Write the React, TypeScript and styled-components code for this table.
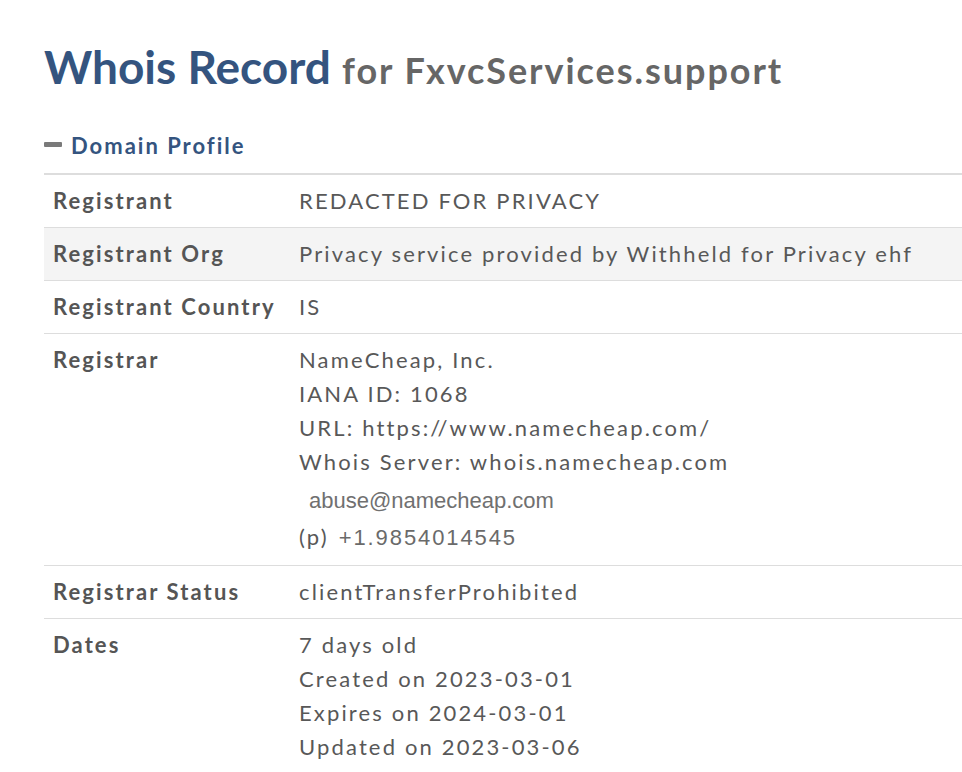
import React from "react";
import styled, { createGlobalStyle } from "styled-components";

const Global = createGlobalStyle`
  html, body { margin: 0; padding: 0; background: #fff; }
  body { font-family: Lato, "Open Sans", sans-serif; color: #555; }
`;

const Page = styled.div`
  padding: 41px 0 0 44px;
  overflow: hidden;
`;

const Title = styled.h1`
  margin: 0;
  font-family: Lato, sans-serif;
  font-weight: 700;
  font-size: 46px;
  line-height: 52px;
  height: 52px;
  color: #34547f;
  white-space: nowrap;
`;

const TitleSub = styled.span`
  font-size: 36px;
  line-height: 1;
  color: #666;
  letter-spacing: 1.95px;
`;

const SectionHead = styled.div`
  display: flex;
  align-items: center;
  gap: 9px;
  margin-top: 40px;
  height: 26px;
  font-weight: 700;
  font-size: 22px;
  line-height: 26px;
  color: #34547f;
  letter-spacing: 2px;
`;

const Minus = styled.span`
  display: inline-block;
  width: 18px;
  height: 5px;
  margin-bottom: 4px;
  border-radius: 1px;
  background: #7a7a7a;
`;

const Table = styled.div`
  margin-top: 14px;
  border-top: 2px solid #ddd;
  width: 960px;
`;

const Row = styled.div<{ $shade?: boolean }>`
  display: grid;
  grid-template-columns: 255px 1fr;
  background: ${(p) => (p.$shade ? "#f4f4f4" : "#fff")};
  border-bottom: 1px solid #ddd;
  padding: 9px 0;
`;

const Label = styled.div`
  padding-left: 9px;
  font-weight: 700;
  font-size: 22px;
  line-height: 34px;
  color: #555;
  letter-spacing: 2.1px;
  white-space: nowrap;
`;

const Value = styled.div`
  font-size: 22px;
  line-height: 34px;
  color: #585858;
  letter-spacing: 2.15px;
  white-space: nowrap;
`;

const Email = styled.div`
  font-family: "Liberation Sans", Arial, sans-serif;
  font-size: 22px;
  letter-spacing: 0;
  color: #707070;
  padding-left: 10px;
  line-height: 36px;
  margin-top: 4px;
`;

const Phone = styled.div`
  line-height: 36px;
`;

const PhoneNum = styled.span`
  font-family: "Liberation Sans", Arial, sans-serif;
  font-size: 22px;
  letter-spacing: 1.9px;
  color: #6a6a6a;
  margin-left: 10px;
`;

const rows: { label: string; lines: React.ReactNode; shade?: boolean }[] = [
  { label: "Registrant", lines: "REDACTED FOR PRIVACY" },
  {
    label: "Registrant Org",
    lines: "Privacy service provided by Withheld for Privacy ehf",
    shade: true,
  },
  { label: "Registrant Country", lines: "IS" },
];

export default function App() {
  return (
    <>
      <Global />
      <Page>
        <Title>
          Whois Record <TitleSub>for FxvcServices.support</TitleSub>
        </Title>
        <SectionHead>
          <Minus />
          Domain Profile
        </SectionHead>
        <Table>
          {rows.map((r) => (
            <Row key={r.label} $shade={r.shade}>
              <Label>{r.label}</Label>
              <Value>{r.lines}</Value>
            </Row>
          ))}
          <Row>
            <Label>Registrar</Label>
            <Value>
              <div>NameCheap, Inc.</div>
              <div>IANA ID: 1068</div>
              <div>URL: https://www.namecheap.com/</div>
              <div>Whois Server: whois.namecheap.com</div>
              <Email>abuse@namecheap.com</Email>
              <Phone>
                (p)<PhoneNum>+1.9854014545</PhoneNum>
              </Phone>
            </Value>
          </Row>
          <Row>
            <Label>Registrar Status</Label>
            <Value>clientTransferProhibited</Value>
          </Row>
          <Row>
            <Label>Dates</Label>
            <Value>
              <div>7 days old</div>
              <div>Created on 2023-03-01</div>
              <div>Expires on 2024-03-01</div>
              <div>Updated on 2023-03-06</div>
            </Value>
          </Row>
        </Table>
      </Page>
    </>
  );
}
